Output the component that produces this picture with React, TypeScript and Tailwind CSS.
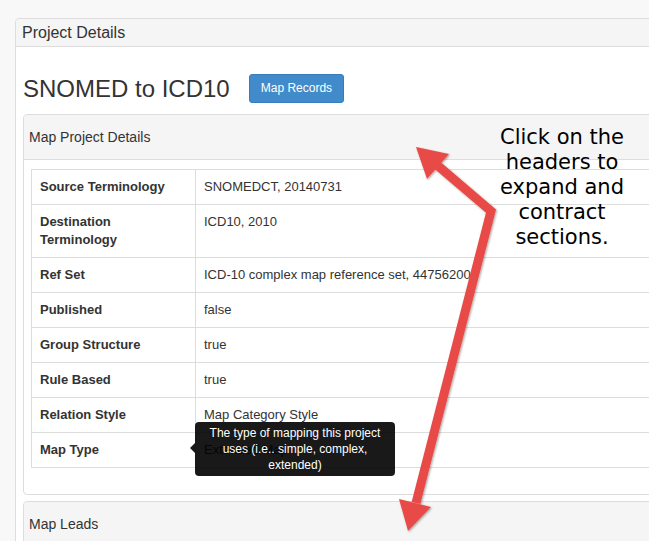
import React from "react";

const rows: { label: string; value: string }[] = [
  { label: "Source Terminology", value: "SNOMEDCT, 20140731" },
  { label: "Destination Terminology", value: "ICD10, 2010" },
  { label: "Ref Set", value: "ICD-10 complex map reference set, 447562003" },
  { label: "Published", value: "false" },
  { label: "Group Structure", value: "true" },
  { label: "Rule Based", value: "true" },
  { label: "Relation Style", value: "Map Category Style" },
  { label: "Map Type", value: "Extended Map" },
];

export default function App() {
  return (
    <div
      className="relative w-[649px] h-[541px] overflow-hidden bg-[#f8f8f8] text-[#333]"
      style={{ fontFamily: '"Liberation Sans", Arial, sans-serif' }}
    >
      <div className="ml-[15px] mt-[18px] w-[720px] border border-[#ddd] rounded-[4px] bg-white">
        <div className="h-[28px] flex items-center px-[6px] bg-[#f5f5f5] border-b border-[#ddd] rounded-t-[4px] text-[16px] leading-[18px]">
          Project Details
        </div>
        <div className="px-[7px] pt-[27px]">
          <div className="flex items-center h-[29px]">
            <h3 className="text-[24px] leading-[26px] font-normal m-0 whitespace-nowrap">SNOMED to ICD10</h3>
            <button className="ml-[19px] h-[29px] px-[11px] rounded-[3px] bg-[#428bca] border border-[#357ebd] text-white text-[12px] leading-[17px] whitespace-nowrap">
              Map Records
            </button>
          </div>

          <div className="mt-[11px] border border-[#ddd] rounded-[4px] bg-white">
            <div className="h-[45px] flex items-center px-[5px] bg-[#f5f5f5] border-b border-[#ddd] rounded-t-[4px] text-[14px] leading-[18px]">
              Map Project Details
            </div>
            <div className="px-[7px] pt-[9px] pb-[26px]">
              <table className="w-[680px] border-collapse border border-[#ddd] text-[13px] leading-[18px]">
                <tbody>
                  {rows.map((r) => (
                    <tr key={r.label}>
                      <td className="w-[164px] border border-[#ddd] px-[8px] py-[8px] align-top font-bold">
                        {r.label === "Destination Terminology" ? (
                          <>
                            Destination
                            <br />
                            Terminology
                          </>
                        ) : (
                          r.label
                        )}
                      </td>
                      <td className="border border-[#ddd] px-[8px] py-[8px] align-top whitespace-nowrap">{r.value}</td>
                    </tr>
                  ))}
                </tbody>
              </table>
            </div>
          </div>

          <div className="mt-[6px] border border-[#ddd] rounded-[4px] bg-white">
            <div className="h-[45px] flex items-center px-[5px] bg-[#f5f5f5] border-b border-[#ddd] rounded-t-[4px] text-[14px] leading-[18px]">
              Map Leads
            </div>
            <div className="h-[60px]" />
          </div>
        </div>
      </div>

      {/* tooltip */}
      <div className="absolute left-[195px] top-[422px] w-[200px] h-[54px] rounded-[4px] bg-black/90 text-white text-[12px] leading-[16px] text-center px-[8px] py-[3px]">
        The type of mapping this project uses (i.e.. simple, complex, extended)
        <div className="absolute left-[-5px] top-[21px] w-0 h-0 border-y-[5px] border-y-transparent border-r-[5px] border-r-black/90" />
      </div>

      {/* annotation text */}
      <div
        className="absolute left-[472px] top-[125px] w-[180px] text-center text-black text-[21px] leading-[25px]"
        style={{ fontFamily: '"DejaVu Sans", Verdana, sans-serif' }}
      >
        Click on the headers to expand and contract sections.
      </div>

      {/* red arrow */}
      <svg className="absolute left-0 top-0 pointer-events-none" width="649" height="541" viewBox="0 0 649 541">
        <defs>
          <filter id="sh" x="-20%" y="-20%" width="140%" height="140%">
            <feDropShadow dx="1" dy="1" stdDeviation="1.2" floodColor="#000" floodOpacity="0.35" />
          </filter>
        </defs>
        <g filter="url(#sh)" fill="#e84c46" stroke="none">
          <polyline points="437,165 491,211 416,503" fill="none" stroke="#e84c46" strokeWidth="9" strokeLinejoin="miter" />
          <polygon points="416,147 449,154 427,179" />
          <polygon points="408,531 399,499 431,507" />
        </g>
      </svg>
    </div>
  );
}
